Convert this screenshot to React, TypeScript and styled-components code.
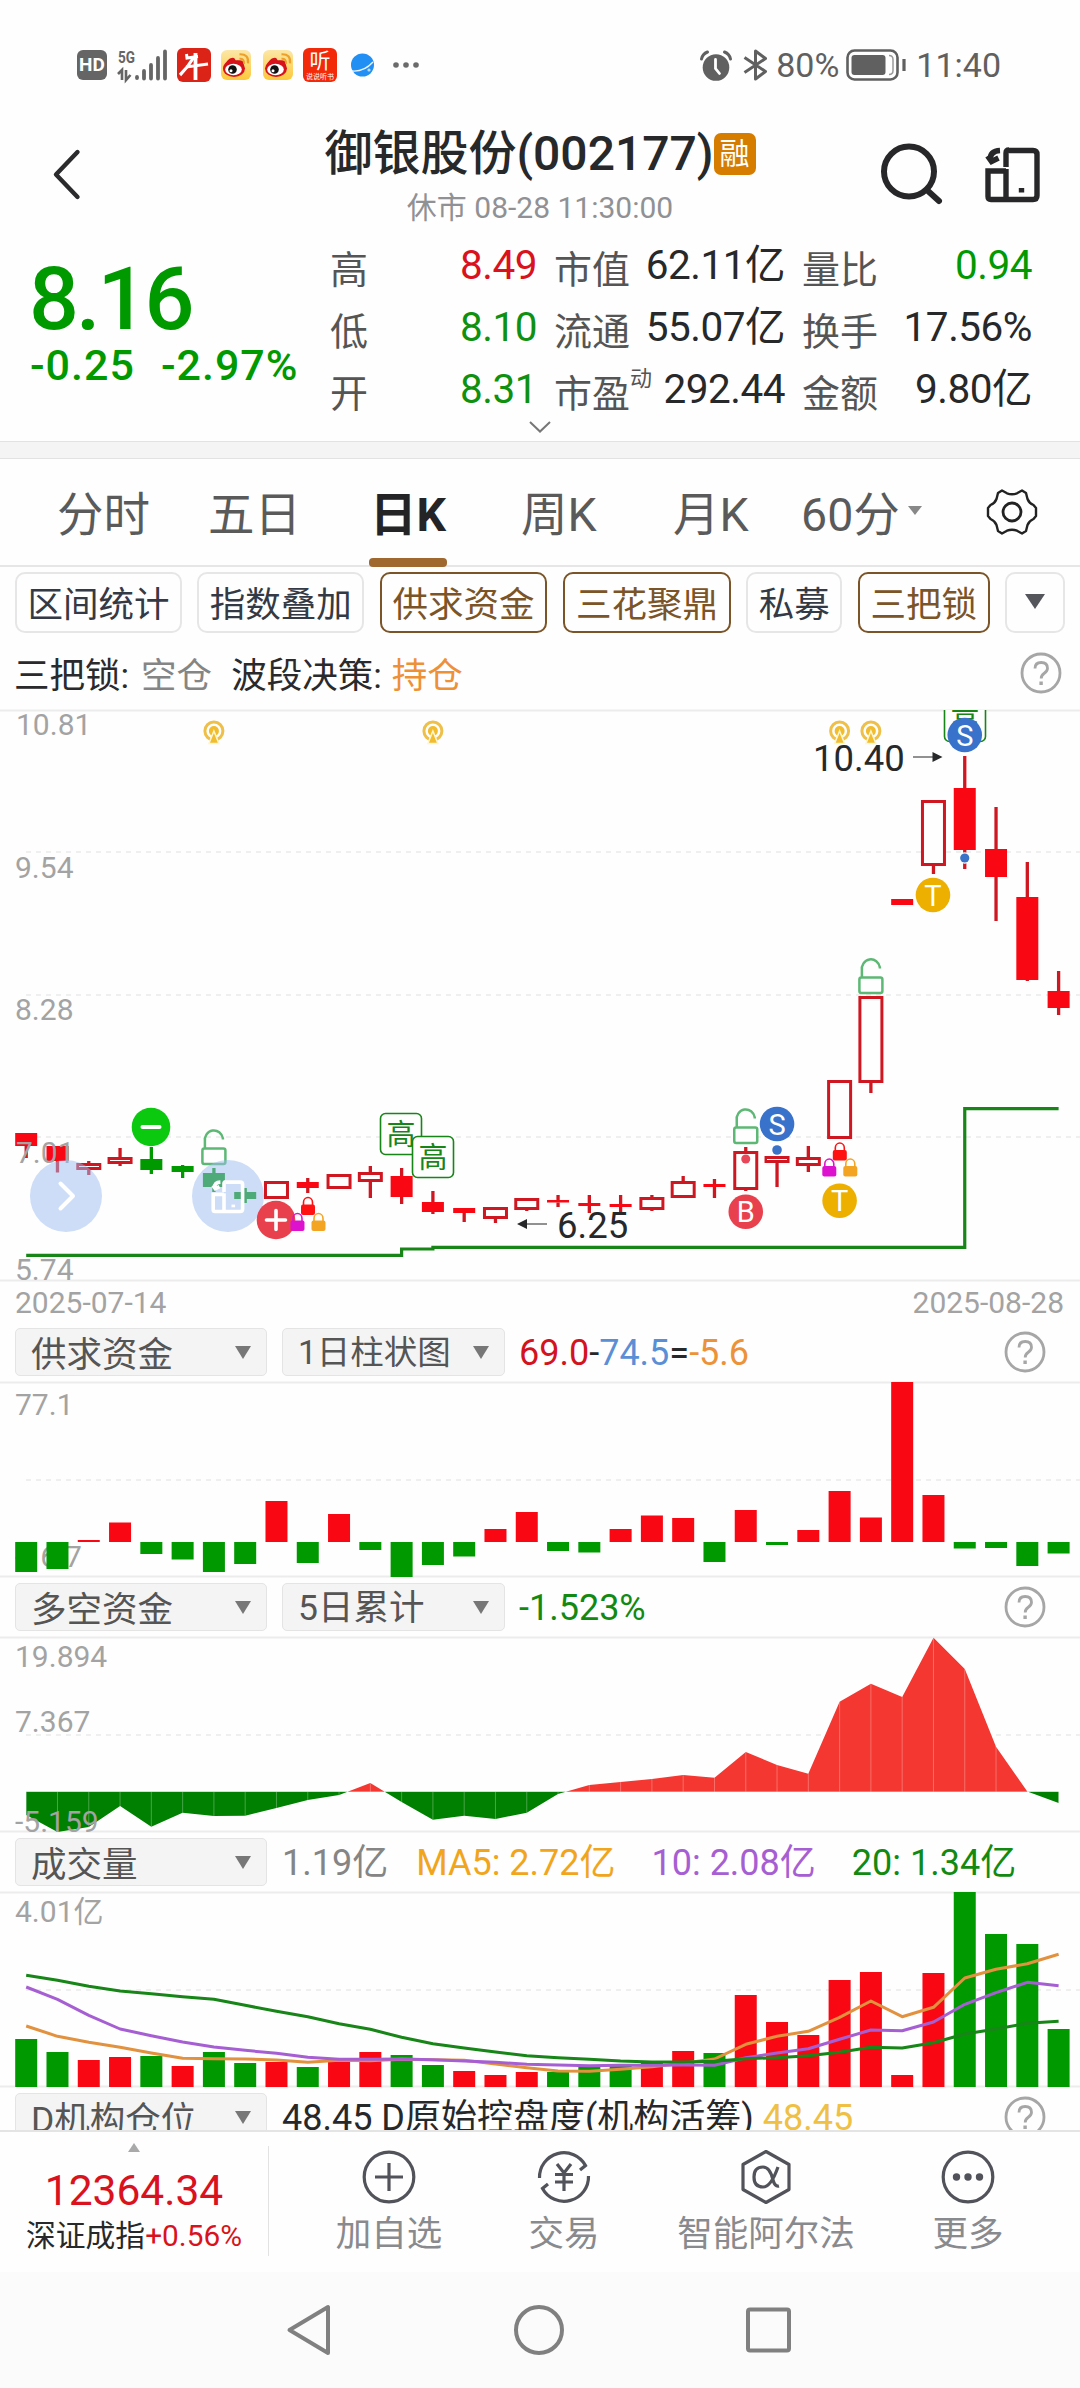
import React from "react";
import styled, { createGlobalStyle } from "styled-components";

const RED = "#f90713";
const GREEN = "#009900";
const LINE_GREEN = "#178517";
const PURPLE = "#a65fd3";
const ORANGE = "#e2913f";

const GlobalStyle = createGlobalStyle`
  * { box-sizing: border-box; }
  html, body { margin: 0; padding: 0; background: #fff; }
  body, svg text { font-family: Roboto, "Noto Sans CJK SC", sans-serif; }
`;

const Screen = styled.main`
  width: 1080px;
  height: 2388px;
  display: flex;
  flex-direction: column;
  overflow: hidden;
  background: #fefefe;
  color: #27282a;
  white-space: nowrap;
`;

const Icon = styled.svg`
  display: block;
  flex: none;
  overflow: visible;
`;

/* ---------- status bar ---------- */

const StatusBar = styled.header`
  display: flex;
  justify-content: space-between;
  align-items: center;
  height: 130px;
  padding: 0 79px 0 77px;
  flex: none;
`;

const StatusGroup = styled.div<{ $gap?: number }>`
  display: flex;
  align-items: center;
`;

const StatusText = styled.span<{ $left: number }>`
  margin-left: ${(p) => p.$left}px;
  font-size: 34px;
  line-height: 40px;
  color: #606060;
`;

const AppTile = styled.span<{ $left: number; $size: number; $bg: string }>`
  display: flex;
  margin-left: ${(p) => p.$left}px;
  width: ${(p) => p.$size}px;
  height: ${(p) => p.$size}px;
  border-radius: 6px;
  background: ${(p) => p.$bg};
  flex-direction: column;
  align-items: center;
  justify-content: center;
  overflow: hidden;
`;

const HdTile = styled(AppTile)`
  color: #fff;
  font-size: 19px;
  line-height: 30px;
  font-weight: 700;
`;

const TileGlyph = styled.span<{ $size: number; $line: number }>`
  color: #fff;
  font-size: ${(p) => p.$size}px;
  line-height: ${(p) => p.$line}px;
`;

const SpacedIcon = styled(Icon)<{ $left: number }>`
  margin-left: ${(p) => p.$left}px;
`;

const Weibo = () => (
  <Icon width="30" height="30" viewBox="0 0 30 30">
    <ellipse cx="13" cy="18.500" rx="11" ry="8.500" fill="#d8121b" />
    <path d="M4 15C6 9 12 6 14 9q1 1.500 0 2.500 5-2.500 8 0 1.500 2 0 4z" fill="#d8121b" />
    <ellipse cx="12.500" cy="19.500" rx="8.300" ry="5.800" fill="#fff" />
    <circle cx="11.500" cy="19.500" r="4.300" fill="#111" />
    <circle cx="10" cy="20.800" r="1.500" fill="#fff" />
    <path d="M18.500 8.800q5 -.5 4.500 5" fill="none" stroke="#eda12b" strokeWidth="2" />
    <path d="M18.500 4.300q9.500-.5 8.500 9" fill="none" stroke="#eda12b" strokeWidth="2.200" />
  </Icon>
);

const Status = () => (
  <StatusBar>
    <StatusGroup>
      <HdTile $left={0} $size={30} $bg="#656565">HD</HdTile>
      <SpacedIcon $left={11} width="49" height="31" viewBox="0 0 49 31">
        <text x="0" y="13" fontSize="17" fontWeight="700" fill="#656565" textLength="17" lengthAdjust="spacingAndGlyphs">5G</text>
        <path d="M0 24l4-4v10M8 20v10l4.500-5" fill="none" stroke="#656565" strokeWidth="2.600" />
        <path d="M19 27v1M26 21v7.500M33 15v13.500M40 8v20.500M47 1.500v27" stroke="#656565" strokeWidth="3.800" strokeLinecap="round" />
      </SpacedIcon>
      <AppTile $left={10} $size={34} $bg="#dc2318">
        <Icon width="34" height="34" viewBox="0 0 34 34" fill="none" stroke="#fff">
          <path d="M9.500 6l.5 4 11-1.500" strokeWidth="3" />
          <path d="M17 9Q11 19 3 27" strokeWidth="3.200" />
          <path d="M9 19l22-3" strokeWidth="2.800" />
          <path d="M18.500 5v27" strokeWidth="3.800" />
        </Icon>
      </AppTile>
      <AppTile $left={10} $size={30} $bg="linear-gradient(#fbe7a8, #fdc93a)"><Weibo /></AppTile>
      <AppTile $left={12} $size={30} $bg="linear-gradient(#fbe7a8, #fdc93a)"><Weibo /></AppTile>
      <AppTile $left={10} $size={34} $bg="#f32a09">
        <TileGlyph $size={21} $line={23}>听</TileGlyph>
        <TileGlyph $size={7} $line={8}>说说听书</TileGlyph>
      </AppTile>
      <SpacedIcon $left={14} width="24" height="24" viewBox="0 0 24 24">
        <circle cx="11.500" cy="12" r="11.500" fill="#218ff3" />
        <path d="M1 18q12 1 21-9" fill="none" stroke="#e8f4ff" strokeWidth="1.400" />
        <circle cx="18" cy="17" r="1.600" fill="#b5dcff" />
      </SpacedIcon>
      <SpacedIcon $left={18} width="26" height="6" viewBox="0 0 26 6">
        <circle cx="3" cy="3" r="2.800" fill="#6b6b6b" /><circle cx="13" cy="3" r="2.800" fill="#6b6b6b" /><circle cx="23" cy="3" r="2.800" fill="#6b6b6b" />
      </SpacedIcon>
    </StatusGroup>
    <StatusGroup>
      <Icon width="32" height="31" viewBox="0 0 32 31" fill="none" stroke="#606060">
        <circle cx="16" cy="17.500" r="13.300" fill="#606060" stroke="none" />
        <path d="M15.500 9.500v9l4 5" stroke="#fff" strokeWidth="2.800" strokeLinecap="round" />
        <path d="M1.500 9q1-5 6-7M30.500 9q-1-5-6-7" strokeWidth="3" strokeLinecap="round" />
      </Icon>
      <SpacedIcon $left={11} width="25" height="32" viewBox="0 0 25 32" fill="none" stroke="#606060" strokeWidth="3" strokeLinejoin="round">
        <path d="M1.500 8.500l21 14L12.500 30V2l10 7.500-21 14" />
      </SpacedIcon>
      <StatusText $left={8}>80%</StatusText>
      <SpacedIcon $left={7} width="62" height="32" viewBox="0 0 62 32">
        <rect x="1.500" y="1.500" width="50" height="29" rx="7" fill="none" stroke="#606060" strokeWidth="2.600" />
        <rect x="5.500" y="6" width="34" height="20" rx="3" fill="#606060" />
        <path d="M43 6.500q4 0 4 4v11q0 4-4 4" fill="none" stroke="#999" strokeWidth="1.500" />
        <path d="M58 10v12" stroke="#606060" strokeWidth="3.200" />
      </SpacedIcon>
      <StatusText $left={8}>11:40</StatusText>
    </StatusGroup>
  </StatusBar>
);

/* ---------- title ---------- */

const TitleBar = styled.section`
  display: grid;
  grid-template-columns: 320px 1fr 320px;
  height: 110px;
  flex: none;
`;

const TitleSide = styled.div<{ $end?: boolean }>`
  display: flex;
  justify-content: ${(p) => (p.$end ? "flex-end" : "flex-start")};
  padding: 14px 40px 0 52px;
  gap: 43px;
`;

const TitleCenter = styled.div`
  display: flex;
  flex-direction: column;
  align-items: center;
`;

const TitleLine = styled.div`
  display: flex;
  align-items: center;
  height: 48px;
  font-size: 48px;
  font-weight: 500;
  line-height: 48px;
`;

const MarginBadge = styled.span`
  width: 42px;
  height: 42px;
  border-radius: 7px;
  background: #d67d00;
  color: #fff;
  font-size: 30px;
  font-weight: 400;
  line-height: 41px;
  text-align: center;
`;

const SubTitle = styled.div`
  margin-top: 14px;
  font-size: 30px;
  line-height: 32px;
  color: #909194;
`;

const PhoneGlyph = () => (
  <>
    <path d="M23 3.500h24q4 0 4 4v41q0 4-4 4H5q-3 0-3-3V24h18" />
    <path d="M20 20V6q0-3 3-3M20 22v30" />
    <path d="M4 13q0-9 10-9.500M1.500 9l4 5.500 7-3.500" />
    <path d="M35.500 41v4.500" />
  </>
);

const PhoneIcon = styled(Icon)`
  margin-top: 3px;
`;

const Title = () => (
  <TitleBar>
    <TitleSide>
      <Icon width="30" height="60" viewBox="0 0 30 60" fill="none" stroke="#2b2b2d" strokeWidth="4.400" strokeLinecap="round" strokeLinejoin="round">
        <path d="M25.500 8L4 30.500 25.500 53" />
      </Icon>
    </TitleSide>
    <TitleCenter>
      <TitleLine>御银股份(002177)<MarginBadge>融</MarginBadge></TitleLine>
      <SubTitle>休市 08-28 11:30:00</SubTitle>
    </TitleCenter>
    <TitleSide $end>
      <Icon width="62" height="62" viewBox="0 0 62 62" fill="none" stroke="#27272a" strokeWidth="6" strokeLinecap="round">
        <circle cx="28" cy="27.500" r="25" />
        <path d="M47 47l11 10" />
      </Icon>
      <PhoneIcon width="54" height="56" viewBox="0 0 54 56" fill="none" stroke="#27272a" strokeWidth="5.400">
        <PhoneGlyph />
      </PhoneIcon>
    </TitleSide>
  </TitleBar>
);

/* ---------- quote ---------- */

const Quote = styled.section`
  display: flex;
  height: 201px;
  flex: none;
  padding-left: 29px;
`;

const PriceBlock = styled.div`
  width: 301px;
  color: ${GREEN};
  font-weight: 500;
`;

const Price = styled.div`
  padding-top: 12px;
  font-size: 88px;
  line-height: 94px;
  letter-spacing: -3px;
`;

const Delta = styled.div`
  display: flex;
  gap: 26px;
  padding-left: 1px;
  font-size: 43px;
  line-height: 38px;
  letter-spacing: 1px;
`;

const QuoteGrid = styled.div`
  display: grid;
  grid-template-columns: 224px 248px 230px;
  grid-template-rows: repeat(3, 62px);
`;

const QuoteCell = styled.div<{ $right: number }>`
  display: flex;
  justify-content: space-between;
  padding-right: ${(p) => p.$right}px;
`;

const QuoteLabel = styled.span`
  display: flex;
  font-size: 38px;
  line-height: 60px;
  color: #555;
`;

const QuoteSup = styled.sup`
  font-size: 22px;
  line-height: 30px;
`;

const QuoteValue = styled.span<{ $color?: string }>`
  font-size: 40.500px;
  line-height: 50px;
  letter-spacing: -0.500px;
  color: ${(p) => p.$color ?? "#27282a"};
`;

const Expand = styled.div`
  display: flex;
  justify-content: center;
  height: 0;
  svg { margin-top: -20px; }
`;

const Band = styled.div`
  height: 18px;
  flex: none;
  background: #f4f4f4;
  border: solid #e2e2e2;
  border-width: 1px 0;
`;

type Cell = { label: string; sup?: string; value: string; color?: string };
const CELLS: Cell[] = [
  { label: "高", value: "8.49", color: "#d9121e" },
  { label: "市值", value: "62.11亿" },
  { label: "量比", value: "0.94", color: GREEN },
  { label: "低", value: "8.10", color: "#0f900f" },
  { label: "流通", value: "55.07亿" },
  { label: "换手", value: "17.56%" },
  { label: "开", value: "8.31", color: "#0f900f" },
  { label: "市盈", sup: "动", value: "292.44" },
  { label: "金额", value: "9.80亿" },
];

/* ---------- tabs & chips ---------- */

const Tabs = styled.nav`
  display: grid;
  grid-template-columns: 57px 151px 161px 152px 152px 128px 186px 1fr;
  height: 108px;
  flex: none;
  border-bottom: 2px solid #e6e6e6;
`;

const Tab = styled.span<{ $active?: boolean }>`
  position: relative;
  display: flex;
  align-items: center;
  height: 102px;
  font-size: 46.500px;
  font-weight: ${(p) => (p.$active ? 700 : 400)};
  color: ${(p) => (p.$active ? "#242426" : "#5a5a5a")};
  &::after {
    content: "";
    display: ${(p) => (p.$active ? "block" : "none")};
    position: absolute;
    left: 0;
    top: 99px;
    width: 78px;
    height: 9px;
    border-radius: 4px;
    background: #9e682f;
  }
`;

const TabText = styled.span<{ $shift?: number }>`
  padding-left: ${(p) => p.$shift ?? 0}px;
`;

const Caret = styled.i<{ $w: number; $h: number; $color: string; $left?: number }>`
  width: 0;
  height: 0;
  margin-left: ${(p) => p.$left ?? 0}px;
  border: solid transparent;
  border-width: ${(p) => p.$h}px ${(p) => p.$w / 2}px 0;
  border-top-color: ${(p) => p.$color};
`;

const GearCell = styled.div`
  padding-top: 29px;
`;

const Chips = styled.div`
  display: flex;
  gap: 15.500px;
  height: 66px;
  flex: none;
  padding: 5px 15px 0;
`;

const Chip = styled.span<{ $active?: boolean; $width: number }>`
  display: flex;
  align-items: center;
  justify-content: center;
  width: ${(p) => p.$width}px;
  height: 61px;
  padding-bottom: 2px;
  border: ${(p) => (p.$active ? "2px solid #7b5427" : "2px solid #e6e6e6")};
  border-radius: 10px;
  font-size: 35.500px;
  color: ${(p) => (p.$active ? "#7b5427" : "#343a45")};
`;

const Signals = styled.div`
  display: flex;
  align-items: center;
  height: 77px;
  flex: none;
  padding: 1px 18px 0 14px;
  font-size: 35.500px;
  svg { margin-left: auto; margin-top: 2px; }
`;

const Signal = styled.span<{ $color?: string; $right?: number }>`
  margin-right: ${(p) => p.$right ?? 0}px;
  color: ${(p) => p.$color ?? "#2a2a2c"};
`;

const Help = () => (
  <Icon width="42" height="42" viewBox="0 0 42 42" fill="none" stroke="#a6a6a6" strokeWidth="2.800">
    <circle cx="21" cy="21" r="19" />
    <path d="M15 16.500q0-6 6.200-6t6.300 5.700q0 3-3.500 5.300-2.800 2-2.800 5" />
    <path d="M21.100 29.500v3.500" strokeWidth="3.400" />
  </Icon>
);

/* ---------- charts ---------- */

const xAt = (i: number) => 26.2 + 31.285 * i;
const toPoints = (ys: number[]) => ys.map((y, i) => `${xAt(i).toFixed(1)},${y.toFixed(1)}`).join(" ");

const ChartSvg = styled.svg`
  display: block;
  flex: none;
  overflow: visible;
`;

const AxisText = styled.text`
  font-size: 30px;
  fill: #a3a3a3;
`;

const Frame = ({ height, grid }: { height: number; grid: number[] }) => (
  <>
    <path d={`M0 .5H1080M0 ${height - 0.5}H1080`} stroke="#ececec" strokeWidth="2" />
    {grid.map((y) => (
      <path key={y} d={`M26 ${y}H1080`} stroke="#efefef" strokeWidth="2" strokeDasharray="5 5" />
    ))}
  </>
);

type Kind = "fill" | "hollow" | "green";
// kind, body top, body bottom, wick high, wick low (price-pane pixels)
const CANDLES: [Kind, number, number, number, number][] = [
  ["fill", 423, 436, 423, 448], ["fill", 436, 451, 436, 462.5], ["hollow", 453, 460, 451, 465],
  ["hollow", 447, 454, 438, 456], ["green", 449, 460, 437, 464], ["green", 456, 462, 455, 468],
  ["green", 463, 477, 458, 482], ["green", 482, 489, 478, 493], ["hollow", 471, 489, 471, 489],
  ["fill", 472, 478, 468, 483], ["hollow", 464, 479, 464, 479], ["hollow", 462, 472, 456, 488],
  ["fill", 466, 487, 458, 494], ["fill", 492, 502, 481, 504], ["fill", 498, 503, 498, 512],
  ["hollow", 497, 509, 497, 513], ["hollow", 488, 500, 488, 501], ["fill", 490, 492.5, 485, 497],
  ["fill", 493, 496, 485, 503], ["fill", 494, 497, 485, 502], ["hollow", 487, 500, 485, 501],
  ["hollow", 471, 488, 466, 488], ["fill", 474, 477, 469, 488], ["hollow", 441, 480, 437, 481],
  ["hollow", 446, 453, 446, 477], ["hollow", 447, 456, 436, 462], ["hollow", 370, 429, 370, 429],
  ["hollow", 286, 373, 286, 383], ["fill", 189, 195, 189, 195], ["hollow", 90, 156, 90, 164],
  ["fill", 78, 140, 46, 159], ["fill", 139, 167, 97, 211], ["fill", 187, 270, 152, 271],
  ["fill", 281, 298, 261, 305],
];

const Candle = ({ i }: { i: number }) => {
  const [kind, top, bottom, high, low] = CANDLES[i];
  const x = xAt(i);
  const stroke = kind === "green" ? GREEN : "#cf1721";
  return (
    <g>
      {high < top && <path d={`M${x} ${high}V${top}`} stroke={stroke} strokeWidth="3.300" />}
      {low > bottom && <path d={`M${x} ${bottom}V${low}`} stroke={stroke} strokeWidth="3.300" />}
      {kind === "hollow" ? (
        <rect x={x - 11} y={top + 1.5} width="22" height={bottom - top - 3} fill="#fefefe" stroke={stroke} strokeWidth="3" />
      ) : (
        <rect x={x - 11} y={top} width="22" height={bottom - top} fill={kind === "green" ? GREEN : RED} />
      )}
    </g>
  );
};

const Coin = ({ x }: { x: number }) => (
  <g>
    <circle cx={x} cy="21" r="9" fill="none" stroke="#eec04a" strokeWidth="3" />
    <circle cx={x} cy="21" r="5" fill="#f1bd2e" />
    <path d={`M${x} 21l5 12.500h-10z`} fill="#f1bd2e" stroke="#fff6cf" strokeWidth="1.500" />
  </g>
);

const OpenLock = ({ x, y }: { x: number; y: number }) => (
  <g fill="none" stroke="#5cb874" strokeWidth="2.500">
    <path d={`M${x - 9} ${y + 18}v-6.500a9 9.500 0 0 1 18-3v1`} />
    <rect x={x - 11.5} y={y + 18.5} width="23" height="15.500" rx="2" fill="#fefefe" />
  </g>
);

const Padlock = ({ x, y, color }: { x: number; y: number; color: string }) => (
  <g>
    <path d={`M${x - 4.5} ${y + 10}v-4a4.500 5 0 0 1 9 0v4`} fill="none" stroke={color} strokeWidth="1.600" />
    <rect x={x - 7} y={y + 8} width="14" height="10.500" rx="2" fill={color} />
  </g>
);

const Disc = ({ x, y, color, letter }: { x: number; y: number; color: string; letter: string }) => (
  <g>
    <circle cx={x} cy={y} r="17.300" fill={color} />
    <text x={x} y={y + 10.5} textAnchor="middle" fontSize="29" fill="#fff">{letter}</text>
  </g>
);

const HighTag = ({ x, y }: { x: number; y: number }) => (
  <g>
    <rect x={x} y={y} width="41" height="41" rx="5" fill="#fefefe" stroke={LINE_GREEN} strokeWidth="1.600" />
    <text x={x + 20.5} y={y + 31} textAnchor="middle" fontSize="29" fill={LINE_GREEN}>高</text>
  </g>
);

const PriceChart = () => (
  <ChartSvg width="1080" height="571" viewBox="0 0 1080 571">
    <defs><clipPath id="pane"><rect width="1080" height="571" /></clipPath></defs>
    <Frame height={571} grid={[142, 285, 427]} />
    {CANDLES.map((_, i) => <Candle key={i} i={i} />)}
    <path d={`M26.200 545.300H${xAt(12)}V539H${xAt(13)}V537.400H${xAt(30)}V398.600H${xAt(33)}`} fill="none" stroke={LINE_GREEN} strokeWidth="3.200" />
    {([[16, 25, "10.81"], [15, 168, "9.54"], [15, 310, "8.28"], [16, 453, "7.01"], [15, 570, "5.74"]] as const).map(([x, y, t]) => (
      <AxisText key={t} x={x} y={y}>{t}</AxisText>
    ))}
    {[6, 13, 26, 27].map((i) => <Coin key={i} x={xAt(i)} />)}

    <circle cx="151" cy="417" r="19.300" fill="#0bc90e" />
    <path d="M142.500 417h17" stroke="#fff" strokeWidth="4" strokeLinecap="round" />
    <OpenLock x={xAt(6)} y={420} />
    <OpenLock x={xAt(23)} y={399} />
    <OpenLock x={xAt(27)} y={249} />
    <HighTag x={380.5} y={403.5} />
    <HighTag x={412.5} y={426.5} />
    <g clipPath="url(#pane)"><HighTag x={944.5} y={-9.5} /></g>

    <circle cx="66" cy="486" r="36" fill="#9cbcf0" fillOpacity=".5" />
    <path d="M60.500 473.500L73 486 60.500 498.500" fill="none" stroke="#fff" strokeWidth="4" strokeLinecap="round" strokeLinejoin="round" />
    <circle cx="228" cy="486" r="36" fill="#9cbcf0" fillOpacity=".5" />
    <g transform="translate(212 470) scale(.6)" fill="none" stroke="#fff" strokeWidth="6"><PhoneGlyph /></g>

    <circle cx="276" cy="510" r="19.300" fill="#e9404e" />
    <path d="M266.500 510h19M276 500.500v19" stroke="#fff" strokeWidth="3.600" strokeLinecap="round" />
    <Padlock x={308} y={486.5} color="#ff1212" />
    <Padlock x={297.5} y={502.5} color="#dd12cf" />
    <Padlock x={318.5} y={502.5} color="#f4a423" />
    <Padlock x={839.8} y={432} color="#ff1212" />
    <Padlock x={829.3} y={448} color="#dd12cf" />
    <Padlock x={850.3} y={448} color="#f4a423" />

    <circle cx={xAt(23)} cy="449" r="4.500" fill="#e8475a" />
    <circle cx={xAt(24)} cy="440" r="4.800" fill="#3a72c8" />
    <circle cx={xAt(30)} cy="148" r="5.800" fill="#fefefe" />
    <circle cx={xAt(30)} cy="148" r="4.600" fill="#3a72c8" />
    <Disc x={xAt(24)} y={414} color="#3872cb" letter="S" />
    <Disc x={xAt(30)} y={25} color="#3872cb" letter="S" />
    <Disc x={xAt(23)} y={501.7} color="#e9404e" letter="B" />
    <Disc x={xAt(26)} y={490.7} color="#edaf00" letter="T" />
    <Disc x={xAt(29) - 0.5} y={185} color="#edaf00" letter="T" />

    <text x="813" y="61" fontSize="36.500" fill="#27282a">10.40</text>
    <path d="M913 47h22" stroke="#555" strokeWidth="1.300" />
    <path d="M942.500 47l-10-5v10z" fill="#27282a" />
    <text x="557" y="527.700" fontSize="36.500" fill="#27282a">6.25</text>
    <path d="M525 514h22" stroke="#555" strokeWidth="1.300" />
    <path d="M517 514l10-5v10z" fill="#27282a" />
  </ChartSvg>
);

const Dates = styled.div`
  display: flex;
  justify-content: space-between;
  height: 41px;
  flex: none;
  padding: 4px 16px 0 15px;
  font-size: 30px;
  line-height: 35px;
  color: #a3a3a3;
`;

/* ---------- indicator panes ---------- */

const PaneHead = styled.div<{ $clip?: boolean }>`
  display: flex;
  align-items: flex-start;
  height: ${(p) => (p.$clip ? 43 : 60)}px;
  flex: none;
  overflow: hidden;
  padding: 6px 34px 0 15px;
  svg { margin-left: auto; margin-top: 3px; }
`;

const Picker = styled.span<{ $width: number; $left?: number; $size?: number }>`
  display: flex;
  align-items: center;
  justify-content: space-between;
  width: ${(p) => p.$width}px;
  height: 48px;
  flex: none;
  margin-left: ${(p) => p.$left ?? 0}px;
  padding: 0 15px;
  border: 1px solid #e4e4e4;
  border-radius: 5px;
  background: #f4f4f4;
  font-size: ${(p) => p.$size ?? 35.5}px;
  line-height: 46px;
  color: #555;
`;

const PickerLabel = styled.span<{ $shift?: number }>`
  padding-top: ${(p) => p.$shift ?? 5}px;
`;

const Readout = styled.span<{ $color: string; $left?: number }>`
  margin-left: ${(p) => p.$left ?? 0}px;
  font-size: 36px;
  line-height: 50px;
  color: ${(p) => p.$color};
`;

type PickerProps = { label: string; width: number; left?: number; shift?: number; size?: number };
const PickerBox = ({ label, width, left, shift, size }: PickerProps) => (
  <Picker $width={width} $left={left} $size={size}>
    <PickerLabel $shift={shift}>{label}</PickerLabel>
    <Caret $w={17} $h={13} $color="#777" />
  </Picker>
);

// bar tips relative to the pane; the zero line sits at y = 160
const FLOW = [190, 187, 158, 140.5, 172, 177.5, 190, 182, 119, 181, 132, 168, 195, 183, 174.5, 147, 130, 169, 170.5, 147, 133.5, 136, 180, 128, 163, 148, 109, 135.5, 0, 113, 166.5, 166, 184, 171.5];

const FlowChart = () => (
  <ChartSvg width="1080" height="195" viewBox="0 0 1080 195">
    <Frame height={195} grid={[98]} />
    <AxisText x="15" y="33">77.1</AxisText>
    <AxisText x="15" y="185">-16.7</AxisText>
    {FLOW.map((y, i) => (
      <rect key={i} x={xAt(i) - 11} y={Math.min(y, 160)} width="22" height={Math.abs(y - 160)} fill={y < 160 ? RED : GREEN} />
    ))}
  </ChartSvg>
);

const TREND = [178, 195, 190, 169, 189.7, 175.7, 179, 178.7, 171, 163, 158, 146, 165, 182.7, 178.7, 182, 175.7, 157, 148, 145, 142, 138, 140.7, 115, 128, 136.7, 64.7, 46.7, 60, 0.7, 32, 109.7, 154.5, 166];

const TrendChart = () => {
  const area = `${xAt(0)},154.700 ${toPoints(TREND)} ${xAt(33)},154.700`;
  return (
    <ChartSvg width="1080" height="195" viewBox="0 0 1080 195">
      <defs>
        <clipPath id="above"><rect width="1080" height="154.700" /></clipPath>
        <clipPath id="below"><rect y="154.700" width="1080" height="41" /></clipPath>
        <clipPath id="trend-area"><polygon points={area} /></clipPath>
      </defs>
      <Frame height={195} grid={[98]} />
      <polygon points={area} fill="#f43730" clipPath="url(#above)" />
      <polygon points={area} fill="#008000" clipPath="url(#below)" />
      <g clipPath="url(#trend-area)" stroke="#fff" strokeOpacity=".28">
        {TREND.map((_, i) => <path key={i} d={`M${xAt(i)} 0V195`} />)}
      </g>
      <AxisText x="15" y="30">19.894</AxisText>
      <AxisText x="15" y="95">7.367</AxisText>
      <AxisText x="15" y="194.500">-5.159</AxisText>
    </ChartSvg>
  );
};

const VOLUME = [147, 160, 168, 165, 164, 174, 160, 171, 170, 175, 168, 160, 163, 173, 179, 183, 180, 180, 175, 172, 171, 159, 161, 103, 130, 143, 88, 80, 183, 81, 0, 42, 52, 137];
const VOLUME_UP = new Set([2, 3, 5, 8, 10, 11, 14, 15, 16, 20, 21, 23, 24, 25, 26, 27, 28, 29]);
const third = (values: number[]) => values.map((v) => v / 3 - 62);
const MA5 = third([588, 619, 637, 652, 669, 685, 686, 687, 690, 697, 691, 692, 688, 689, 691, 702, 713, 723, 724, 718, 710, 700, 687, 643, 619, 604, 562, 513, 560, 532, 444, 418, 401, 373]);
const MA10 = third([471, 508, 556, 597, 617, 636, 651, 661, 670, 682, 688, 688, 687, 689, 693, 697, 703, 705, 707, 706, 706, 705, 706, 683, 669, 656, 628, 600, 602, 576, 523, 488, 457, 467]);
const MA20 = third([436, 451, 469, 483, 491, 500, 508, 526, 544, 560, 581, 598, 622, 641, 654, 666, 677, 683, 688, 693, 696, 696, 694, 686, 683, 677, 667, 652, 654, 638, 612, 597, 580, 574]);

const VolumeChart = () => (
  <ChartSvg width="1080" height="195" viewBox="0 0 1080 195">
    <Frame height={195} grid={[98]} />
    <AxisText x="15" y="30">4.01亿</AxisText>
    {VOLUME.map((y, i) => (
      <rect key={i} x={xAt(i) - 11} y={y} width="22" height={195 - y} fill={VOLUME_UP.has(i) ? RED : GREEN} />
    ))}
    <g fill="none" strokeWidth="3" strokeLinejoin="round">
      <polyline points={toPoints(MA5)} stroke={ORANGE} />
      <polyline points={toPoints(MA10)} stroke={PURPLE} />
      <polyline points={toPoints(MA20)} stroke={LINE_GREEN} />
    </g>
  </ChartSvg>
);

/* ---------- footer ---------- */

const Footer = styled.footer`
  display: flex;
  height: 142px;
  flex: none;
  border-top: 2px solid #e4e4e4;
  background: #fefefe;
`;

const IndexCard = styled.div`
  display: flex;
  flex-direction: column;
  align-items: center;
  width: 269px;
  height: 110px;
  margin-top: 14px;
  border-right: 1px solid #e2e2e2;
`;

const UpMark = styled.i`
  margin-top: -3px;
  border: solid transparent;
  border-width: 0 6.500px 9px;
  border-bottom-color: #a9a9a9;
`;

const IndexValue = styled.div`
  margin-top: 16px;
  font-size: 42.500px;
  line-height: 46px;
  color: #d9121e;
`;

const IndexName = styled.div`
  margin-top: 6px;
  font-size: 29.800px;
  line-height: 32px;
`;

const Rise = styled.span`
  color: #d9121e;
`;

const Actions = styled.div`
  display: grid;
  grid-template-columns: 240px 110px 294px 110px;
`;

const Action = styled.div`
  display: flex;
  flex-direction: column;
  align-items: center;
  padding-top: 17px;
  font-size: 35.500px;
  line-height: 40px;
  color: #898a8e;
`;

const ActionLabel = styled.span`
  margin-top: 9px;
`;

const SystemNav = styled.nav`
  display: flex;
  align-items: center;
  justify-content: space-between;
  flex: 1;
  padding: 0 289px 0 286px;
  background: #fbfbfb;
`;

const ACTIONS: { label: string; art: React.ReactNode }[] = [
  { label: "加自选", art: <><circle cx="28" cy="28" r="24.800" /><path d="M28 14v28M14 28h28" /></> },
  {
    label: "交易",
    art: (
      <>
        <path d="M3.500 29A24.500 24.500 0 0 1 49.500 16.500L44 21M52.500 27A24.500 24.500 0 0 1 6.500 39.500L12 35" />
        <path d="M21 15l7 9 7-9M28 24v18M19 25.500h18M19 33h18" />
      </>
    ),
  },
  {
    label: "智能阿尔法",
    art: (
      <>
        <path d="M28 2.500L51 15.500v25L28 53.500 5 40.500v-25z" strokeLinejoin="round" />
        <path d="M40 18q-7 20-15 20-9 0-9-10t9-10q7 0 10 13 2 7 6 6" />
      </>
    ),
  },
  {
    label: "更多",
    art: (
      <>
        <circle cx="28" cy="28" r="24.800" />
        <g fill="#52535a" stroke="none"><circle cx="16.500" cy="28" r="3.700" /><circle cx="28" cy="28" r="3.700" /><circle cx="39.500" cy="28" r="3.700" /></g>
      </>
    ),
  },
];

export default function App() {
  return (
    <>
      <GlobalStyle />
      <Screen>
        <Status />
        <Title />

        <Quote>
          <PriceBlock>
            <Price>8.16</Price>
            <Delta><span>-0.25</span><span>-2.97%</span></Delta>
          </PriceBlock>
          <QuoteGrid>
            {CELLS.map((c, i) => (
              <QuoteCell key={c.label} $right={i % 3 === 2 ? -1 : 17}>
                <QuoteLabel>{c.label}{c.sup && <QuoteSup>{c.sup}</QuoteSup>}</QuoteLabel>
                <QuoteValue $color={c.color}>{c.value}</QuoteValue>
              </QuoteCell>
            ))}
          </QuoteGrid>
        </Quote>
        <Expand>
          <Icon width="22" height="12" viewBox="0 0 22 12" fill="none" stroke="#777" strokeWidth="2"><path d="M1 1l10 9.500L21 1" /></Icon>
        </Expand>
        <Band />

        <Tabs>
          <span />
          <Tab><TabText>分时</TabText></Tab>
          <Tab><TabText>五日</TabText></Tab>
          <Tab $active><TabText $shift={1}>日K</TabText></Tab>
          <Tab><TabText>周K</TabText></Tab>
          <Tab><TabText>月K</TabText></Tab>
          <Tab><TabText>60分</TabText><Caret $w={14} $h={9} $color="#888" $left={8} /></Tab>
          <GearCell>
            <Icon width="50" height="50" viewBox="0 0 50 50" fill="none" stroke="#222" strokeWidth="2.400" strokeLinejoin="round">
              <path d="M15 2.500l5 2.800q5 2 10 0l5-2.800 4 2.500 1.500 6q1.500 4 6 6l2.500 3v8l-2.500 3q-4.500 2-6 6l-1.500 6-4 2.500-5-2.800q-5-2-10 0l-5 2.800-4-2.500-1.500-6q-1.500-4-6-6l-2.500-3v-8l2.500-3q4.500-2 6-6l1.500-6z" />
              <circle cx="25" cy="24" r="9" strokeWidth="2.800" />
            </Icon>
          </GearCell>
        </Tabs>

        <Chips>
          <Chip $width={167}>区间统计</Chip>
          <Chip $width={167}>指数叠加</Chip>
          <Chip $width={168} $active>供求资金</Chip>
          <Chip $width={168} $active>三花聚鼎</Chip>
          <Chip $width={96}>私募</Chip>
          <Chip $width={132} $active>三把锁</Chip>
          <Chip $width={60}><Caret $w={20} $h={15} $color="#55565c" /></Chip>
        </Chips>

        <Signals>
          <Signal $right={12}>三把锁:</Signal>
          <Signal $color="#858585" $right={19}>空仓</Signal>
          <Signal $right={10}>波段决策:</Signal>
          <Signal $color="#ee9036">持仓</Signal>
          <Help />
        </Signals>

        <PriceChart />
        <Dates><span>2025-07-14</span><span>2025-08-28</span></Dates>

        <PaneHead>
          <PickerBox label="供求资金" width={252} />
          <PickerBox label="1日柱状图" width={223} left={15} shift={1} size={33.5} />
          <Readout $color="#d3131e" $left={14}>69.0</Readout>
          <Readout $color="#27282a">-</Readout>
          <Readout $color="#5a8fd6">74.5</Readout>
          <Readout $color="#27282a">=</Readout>
          <Readout $color="#ec9238">-5.6</Readout>
          <Help />
        </PaneHead>
        <FlowChart />

        <PaneHead>
          <PickerBox label="多空资金" width={252} />
          <PickerBox label="5日累计" width={223} left={15} shift={1} />
          <Readout $color="#128a12" $left={14}>-1.523%</Readout>
          <Help />
        </PaneHead>
        <TrendChart />

        <PaneHead>
          <PickerBox label="成交量" width={252} />
          <Readout $color="#858585" $left={15}>1.19亿</Readout>
          <Readout $color="#f0a51d" $left={28}>MA5: 2.72亿</Readout>
          <Readout $color={PURPLE} $left={36}>10: 2.08亿</Readout>
          <Readout $color="#128a12" $left={36}>20: 1.34亿</Readout>
        </PaneHead>
        <VolumeChart />

        <PaneHead $clip>
          <PickerBox label="D机构仓位" width={252} />
          <Readout $color="#27282a" $left={15}>48.45 D原始控盘度(机构活筹)</Readout>
          <Readout $color="#efc044" $left={9}>48.45</Readout>
          <Help />
        </PaneHead>

        <Footer>
          <IndexCard>
            <UpMark />
            <IndexValue>12364.34</IndexValue>
            <IndexName>深证成指<Rise>+0.56%</Rise></IndexName>
          </IndexCard>
          <Actions>
            {ACTIONS.map((a) => (
              <Action key={a.label}>
                <Icon width="56" height="56" viewBox="0 0 56 56" fill="none" stroke="#52535a" strokeWidth="3.200">{a.art}</Icon>
                <ActionLabel>{a.label}</ActionLabel>
              </Action>
            ))}
          </Actions>
        </Footer>

        <SystemNav>
          <Icon width="46" height="52" viewBox="0 0 46 52" fill="none" stroke="#808080" strokeWidth="4" strokeLinejoin="round"><path d="M42 3v46L3.500 26z" /></Icon>
          <Icon width="52" height="52" viewBox="0 0 52 52" fill="none" stroke="#808080" strokeWidth="4"><circle cx="26" cy="26" r="23" /></Icon>
          <Icon width="46" height="46" viewBox="0 0 46 46" fill="none" stroke="#808080" strokeWidth="4"><rect x="3" y="2.500" width="41" height="41" rx="2" /></Icon>
        </SystemNav>
      </Screen>
    </>
  );
}
